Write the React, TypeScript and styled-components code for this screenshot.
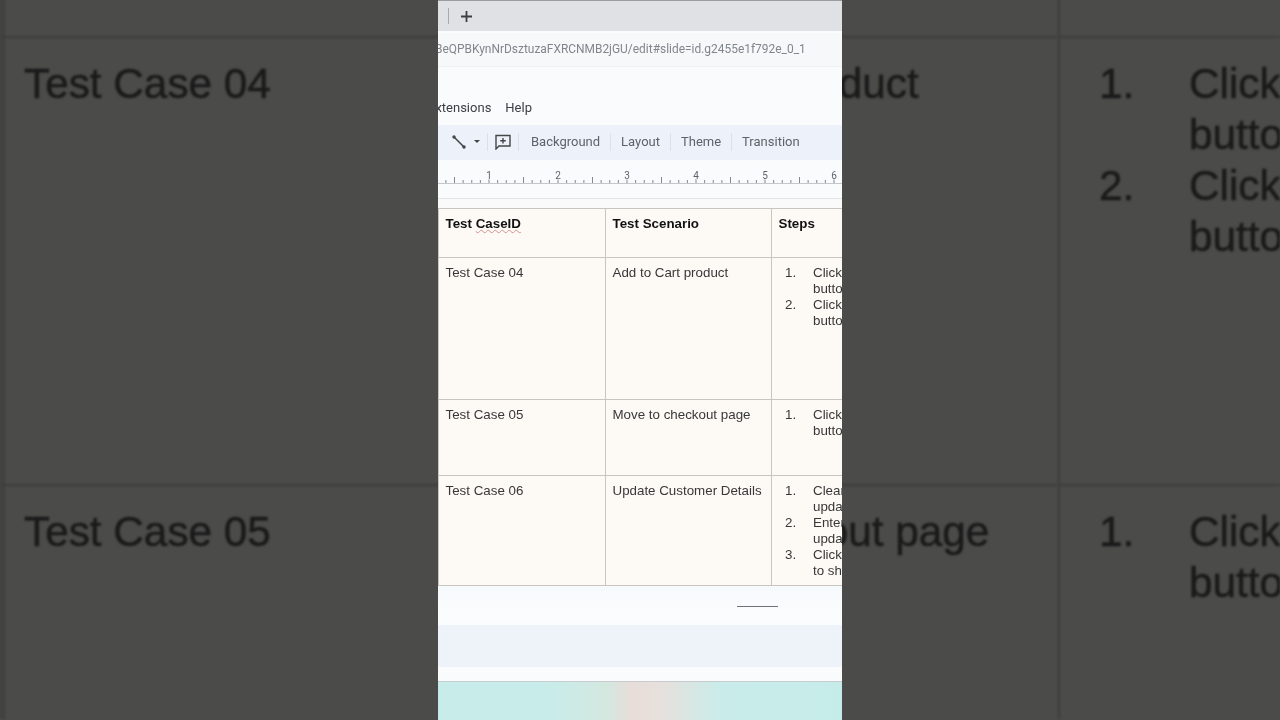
import React from 'react';
import styled, { createGlobalStyle } from 'styled-components';

const TICKS = Array.from({ length: 56 }, (_, i) => i);
const RULER_NUMBERS = [1, 2, 3, 4, 5, 6];

function steps(lines: string[][]) {
  return lines.map((line, i) => (
    <StepRow key={i}>
      <StepNumber>{i + 1}.</StepNumber>
      <div>
        {line.map(text => (
          <StepLine key={text}>{text}</StepLine>
        ))}
      </div>
    </StepRow>
  ));
}

function BackdropSteps({ lines }: { lines: string[][] }) {
  return (
    <>
      {lines.map((line, i) => (
        <BigStepRow key={i}>
          <BigStepNumber>{i + 1}.</BigStepNumber>
          <div>
            {line.map(text => (
              <BigStepLine key={text}>{text}</BigStepLine>
            ))}
          </div>
        </BigStepRow>
      ))}
    </>
  );
}

function Ruler() {
  return (
    <RulerSvg width="404" height="38" viewBox="0 0 404 38">
      <line x1="0" y1="23.5" x2="404" y2="23.5" stroke="#c4c7c9" />
      {TICKS.map(i => {
        const x = 51 - 69 + i * 8.625;
        const half = i % 8 === 4;
        const major = i % 8 === 0;
        return (
          <line
            key={i}
            x1={x}
            x2={x}
            y1={half ? 17 : major ? 19 : 20}
            y2="23"
            stroke="#85898d"
            strokeWidth="1"
          />
        );
      })}
      {RULER_NUMBERS.map(n => (
        <RulerNumber key={n} x={51 + (n - 1) * 69} y="18.5" textAnchor="middle">
          {n}
        </RulerNumber>
      ))}
    </RulerSvg>
  );
}

export default function App() {
  return (
    <Page>
      <GlobalStyle />
      <Backdrop>
        <BigCell />
        <BigCell />
        <BigCell />
        <BigCell />
        <BigCell />
        <BigCell><BigText>Test Case 04</BigText></BigCell>
        <BigCell><BigText>Add to Cart product</BigText></BigCell>
        <BigCell>
          <BackdropSteps lines={[['Click', 'button'], ['Click', 'button']]} />
        </BigCell>
        <BigCell />
        <BigCell><BigText>Test Case 05</BigText></BigCell>
        <BigCell><BigText>Move to checkout page</BigText></BigCell>
        <BigCell>
          <BackdropSteps lines={[['Click', 'button']]} />
        </BigCell>
      </Backdrop>

      <Screen>
        <TabStrip>
          <TabDivider />
          <svg width="11" height="11" viewBox="0 0 11 11">
            <path d="M5.5 0v11M0 5.5h11" stroke="#3c4043" strokeWidth="1.8" />
          </svg>
        </TabStrip>
        <AddressBar>
          <Url>BeQPBKynNrDsztuzaFXRCNMB2jGU/edit#slide=id.g2455e1f792e_0_1</Url>
        </AddressBar>
        <MenuBar>
          <MenuItem>Extensions</MenuItem>
          <MenuItem>Help</MenuItem>
        </MenuBar>
        <Toolbar>
          <IconGroup>
            <svg width="16" height="16" viewBox="0 0 16 16">
              <path d="M3 3L13 13" stroke="#444746" strokeWidth="1.6" />
              <circle cx="3" cy="3" r="1.7" fill="#444746" />
              <circle cx="13" cy="13" r="1.7" fill="#444746" />
            </svg>
            <Caret />
            <ToolDivider />
            <svg width="16" height="16" viewBox="0 0 16 16">
              <path
                d="M1 1.5h14v10.5H4L1 15zM8 4v5.5M5.2 6.7h5.6"
                fill="none"
                stroke="#444746"
                strokeWidth="1.4"
              />
            </svg>
            <ToolDivider />
          </IconGroup>
          <ToolLabel>Background</ToolLabel>
          <ToolDivider />
          <ToolLabel>Layout</ToolLabel>
          <ToolDivider />
          <ToolLabel>Theme</ToolLabel>
          <ToolDivider />
          <ToolLabel>Transition</ToolLabel>
        </Toolbar>
        <RulerBar>
          <Ruler />
        </RulerBar>
        <SlideGap />
        <CaseTable>
          <HeadCell>Test <Misspelt>CaseID</Misspelt></HeadCell>
          <HeadCell>Test Scenario</HeadCell>
          <HeadCell>Steps</HeadCell>

          <Cell>Test Case 04</Cell>
          <Cell>Add to Cart product</Cell>
          <Cell $steps>{steps([['Click', 'button'], ['Click', 'button']])}</Cell>

          <Cell>Test Case 05</Cell>
          <Cell>Move to checkout page</Cell>
          <Cell $steps>{steps([['Click', 'button']])}</Cell>

          <Cell>Test Case 06</Cell>
          <Cell>Update Customer Details</Cell>
          <Cell $steps>{steps([['Clear', 'update'], ['Enter', 'updated'], ['Click', 'to show']])}</Cell>
        </CaseTable>
        <SlideFooter>
          <FooterDash />
        </SlideFooter>
        <NotesBand />
        <NotesEnd />
        <Wallpaper />
      </Screen>
    </Page>
  );
}

const GlobalStyle = createGlobalStyle`
  html, body {
    margin: 0;
    padding: 0;
    background: #4b4b4b;
    overflow: hidden;
  }
`;

const Page = styled.div`
  position: relative;
  width: 1280px;
  height: 720px;
  overflow: hidden;
  background: #4b4b4a;
`;

/* blown up, blurred copy of the video behind the phone-sized frame */
const Backdrop = styled.div`
  display: grid;
  grid-template-columns: 3px 528px 527px 222px;
  grid-template-rows: 37px 448px 235px;
  width: 1280px;
  height: 720px;
  margin-top: -1px;
  font-family: 'Liberation Sans', Arial, sans-serif;
  color: #1a1a1a;
  filter: blur(1.2px);

  & > :nth-child(5) {
    grid-row: 2;
  }
`;

const BigCell = styled.div`
  box-sizing: border-box;
  padding: 20px 0 0 19px;
  border-left: 2px solid #3d3d3c;
  border-top: 2px solid #3d3d3c;
  overflow: hidden;
  &:nth-child(-n + 4) {
    border-top: 0;
  }
`;

const BigText = styled.div`
  font-size: 42.3px;
  line-height: 51px;
  white-space: nowrap;
  -webkit-text-stroke: 0.5px #1a1a1a;
`;

const BigStepRow = styled.div`
  display: flex;
  padding-left: 20px;
  font-size: 42.3px;
  line-height: 51px;
  -webkit-text-stroke: 0.5px #1a1a1a;
`;

const BigStepNumber = styled.div`
  width: 90px;
  flex: none;
`;

const BigStepLine = styled.div`
  white-space: nowrap;
`;

const Screen = styled.main`
  position: absolute;
  top: 0;
  left: 438px;
  width: 404px;
  height: 720px;
  display: flex;
  flex-direction: column;
  overflow: hidden;
  background: #f9fbfd;
  font-family: Roboto, 'Liberation Sans', sans-serif;
  filter: blur(0.3px);
`;

const TabStrip = styled.div`
  flex: none;
  height: 31px;
  box-sizing: border-box;
  border-top: 1px solid #9a9b9c;
  background: #dfe1e4;
  display: flex;
  align-items: center;
  padding-left: 10px;
  gap: 12px;
`;

const TabDivider = styled.div`
  width: 1px;
  height: 16px;
  background: #a9abae;
`;

const AddressBar = styled.div`
  flex: none;
  height: 33px;
  margin-top: 2px;
  background: #f7f8fa;
  border-bottom: 1px solid #f0f1f3;
  display: flex;
  align-items: flex-start;
`;

const Url = styled.div`
  margin: 8px 0 0 -3px;
  font-size: 11.95px;
  line-height: 16px;
  color: #80868b;
  white-space: nowrap;
`;

const MenuBar = styled.div`
  flex: none;
  height: 58px;
  box-sizing: border-box;
  display: flex;
  align-items: flex-end;
  gap: 14px;
  padding: 0 0 9px;
  margin-left: -10px;
  background: #f9fbfd;
`;

const MenuItem = styled.div`
  font-size: 13px;
  line-height: 16px;
  color: #3c4043;
`;

const Toolbar = styled.div`
  flex: none;
  height: 35px;
  box-sizing: border-box;
  padding: 0 0 2px 13px;
  display: flex;
  align-items: center;
  gap: 10px;
  background: #edf2fa;
`;

const IconGroup = styled.div`
  display: flex;
  align-items: center;
  gap: 7px;
  margin-right: 2px;
`;

const Caret = styled.div`
  width: 0;
  height: 0;
  border-left: 3.5px solid transparent;
  border-right: 3.5px solid transparent;
  border-top: 3.5px solid #444746;
`;

const ToolDivider = styled.div`
  width: 1px;
  height: 18px;
  background: #dde1e7;
`;

const ToolLabel = styled.div`
  font-size: 13px;
  line-height: 16px;
  color: #5f6368;
`;

const RulerBar = styled.div`
  flex: none;
  height: 38px;
  background: #f9fbfd;
  border-bottom: 1px solid #e3e4e6;
`;

const RulerSvg = styled.svg`
  display: block;
`;

const RulerNumber = styled.text`
  font-family: Roboto, 'Liberation Sans', sans-serif;
  font-size: 10px;
  fill: #5f6368;
  paint-order: stroke;
  stroke: #f9fbfd;
  stroke-width: 1px;
`;

const SlideGap = styled.div`
  flex: none;
  height: 9px;
  background: #fafafa;
`;

const CaseTable = styled.div`
  flex: none;
  display: grid;
  grid-template-columns: 167px 166px 71px;
  grid-template-rows: 49px 142px 76px 110px;
  border-top: 1px solid #c9c6c2;
  background: #fdfaf6;
  font-family: 'Liberation Sans', Arial, sans-serif;
  font-size: 13.35px;
  line-height: 16px;
`;

const Cell = styled.div<{ $steps?: boolean }>`
  box-sizing: border-box;
  padding: 7px 0 0 ${props => (props.$steps ? 0 : 6.5)}px;
  border-left: 1px solid #c9c6c2;
  border-bottom: 1px solid #c9c6c2;
  color: #383838;
  white-space: nowrap;
  overflow: hidden;
`;

const HeadCell = styled(Cell)`
  font-weight: bold;
  color: #111;
`;

const Misspelt = styled.span`
  text-decoration: underline wavy #d98f8f 1px;
  text-underline-offset: 1px;
`;

const StepRow = styled.div`
  display: flex;
  padding-left: 13px;
`;

const StepNumber = styled.div`
  flex: none;
  width: 28px;
`;

const StepLine = styled.div`
  white-space: nowrap;
`;

const SlideFooter = styled.div`
  flex: none;
  height: 39px;
  box-sizing: border-box;
  padding: 2px 64px 0 0;
  display: flex;
  justify-content: flex-end;
  align-items: center;
  background: linear-gradient(180deg, #f7fafc, #fbfcfe);
`;

const FooterDash = styled.div`
  width: 41px;
  height: 1px;
  background: #6f7377;
`;

const NotesBand = styled.div`
  flex: none;
  height: 42px;
  background: #eef2f9;
`;

const NotesEnd = styled.div`
  flex: none;
  height: 14px;
  background: #f9fbfd;
  border-bottom: 1px solid #c8cccf;
`;

const Wallpaper = styled.div`
  flex: 1;
  background: linear-gradient(
    90deg,
    #c8ecea 0%,
    #c8ecea 28%,
    #d4e7df 42%,
    #e8ddd8 48%,
    #e6e0dc 55%,
    #c9ecea 70%,
    #c6ecea 100%
  );
`;
